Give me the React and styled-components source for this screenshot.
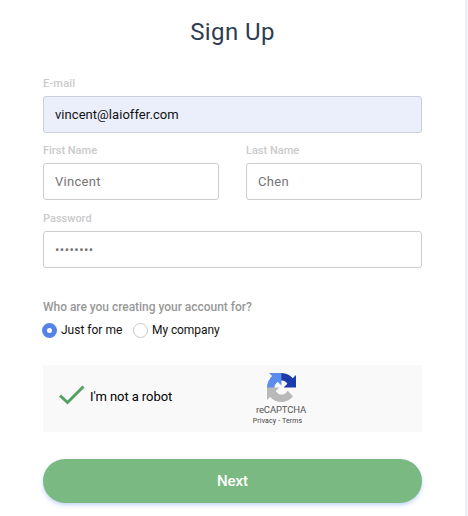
import React from 'react';
import styled, { createGlobalStyle } from 'styled-components';

const GlobalStyle = createGlobalStyle`
  *, *::before, *::after { box-sizing: border-box; }
  body {
    margin: 0;
    background: #efeff6;
    font-family: Roboto, sans-serif;
    overflow: hidden;
  }
`;

const Card = styled.main`
  width: 465px;
  height: 516px;
  padding: 18px 43px 0;
  background: #fff;
`;

const Title = styled.h1`
  margin: 0 0 30px;
  font-size: 24px;
  font-weight: 400;
  line-height: 29px;
  letter-spacing: 0.4px;
  text-align: center;
  color: #2e3d51;
`;

const Form = styled.form`
  display: flex;
  flex-direction: column;
  width: 379px;
`;

const Row = styled.div`
  display: grid;
  grid-template-columns: 176px 176px;
  justify-content: space-between;
`;

const Field = styled.label`
  display: flex;
  flex-direction: column;
  height: 67.3px;
`;

const Label = styled.span`
  flex: none;
  height: 19px;
  font-size: 11px;
  font-weight: 500;
  line-height: 14px;
  letter-spacing: ${(p) => p.$spacing || '0'};
  color: #cacaca;
`;

const Input = styled.input`
  width: 100%;
  height: 37px;
  padding: 0 11px;
  border: 1px solid ${(p) => (p.$filled ? '#cbcfd9' : '#cdcdcd')};
  border-radius: 3px;
  outline: none;
  background: ${(p) => (p.$filled ? '#ebeffc' : '#fff')};
  color: ${(p) => (p.$filled ? '#111' : '#757575')};
  font: 400 13px Roboto, sans-serif;
  letter-spacing: ${(p) => p.$spacing || '0.05px'};
`;

const Question = styled.p`
  margin: 21px 0 9px;
  font-size: 12px;
  font-weight: 500;
  line-height: 14px;
  letter-spacing: -0.03px;
  color: #989898;
`;

const Choices = styled.div`
  display: flex;
  align-items: center;
  height: 15px;
  margin-left: -1px;
`;

const Choice = styled.label`
  display: flex;
  align-items: center;
  gap: 4px;
  width: ${(p) => p.$width};
  font-size: 12px;
  line-height: 15px;
  letter-spacing: ${(p) => p.$spacing};
  white-space: nowrap;
  color: #111;
`;

const Radio = styled.span`
  flex: none;
  width: 15px;
  height: 15px;
  margin-top: 1px;
  border: ${(p) => (p.$checked ? '5px solid #5582ea' : '1px solid #c9c9c9')};
  border-radius: 50%;
  background: #fff;
`;

const Captcha = styled.div`
  display: flex;
  height: 67px;
  margin-top: 27px;
  background: #f9f9f9;
`;

const CheckIcon = styled.svg`
  flex: none;
  width: 28px;
  height: 22px;
  margin: 19px 4px 0 15px;
`;

const CaptchaText = styled.span`
  width: 163px;
  padding-top: 24px;
  font-size: 13px;
  line-height: 15px;
  letter-spacing: -0.08px;
  color: #000;
`;

const Brand = styled.div`
  display: flex;
  flex-direction: column;
  align-items: center;
  width: 56px;
  padding-top: 8px;
`;

const Logo = styled.svg`
  width: 29px;
  height: 29px;
`;

const BrandName = styled.span`
  margin-top: 2px;
  font-size: 9.5px;
  line-height: 12px;
  letter-spacing: -0.15px;
  color: #555;
`;

const BrandLinks = styled.span`
  margin-right: 7px;
  font-size: 7px;
  line-height: 10px;
  letter-spacing: 0.13px;
  white-space: nowrap;
  color: #444;
`;

const NextButton = styled.button`
  height: 44px;
  margin-top: 27px;
  padding: 0;
  border: 0;
  border-radius: 22px;
  background: #7ab982;
  box-shadow: 0 2px 4px rgba(80, 130, 235, 0.35);
  font: 500 15px/44px Roboto, sans-serif;
  color: #fff;
`;

function TextField({ label, labelSpacing, ...input }) {
  return (
    <Field>
      <Label $spacing={labelSpacing}>{label}</Label>
      <Input {...input} />
    </Field>
  );
}

export default function App() {
  return (
    <>
      <GlobalStyle />
      <Card>
        <Title>Sign Up</Title>
        <Form>
          <TextField label="E-mail" labelSpacing="0.2px" defaultValue="vincent@laioffer.com" $filled />
          <Row>
            <TextField label="First Name" defaultValue="Vincent" $spacing="0.3px" />
            <TextField label="Last Name" defaultValue="Chen" $spacing="0.35px" />
          </Row>
          <TextField label="Password" defaultValue="••••••••" $spacing="0.45px" />
          <Question>Who are you creating your account for?</Question>
          <Choices>
            <Choice $width="91px" $spacing="0">
              <Radio $checked />
              Just for me
            </Choice>
            <Choice $width="90px" $spacing="-0.08px">
              <Radio />
              My company
            </Choice>
          </Choices>
          <Captcha>
            <CheckIcon viewBox="0 0 28 22">
              <path d="M2 11.5 L9.5 18.5 L25.5 2.5" fill="none" stroke="#55a162" strokeWidth="3" />
            </CheckIcon>
            <CaptchaText>I'm not a robot</CaptchaText>
            <Brand>
              <Logo viewBox="0 0 64 64">
                <path fill="#1c3aa9" d="M64 31.955l-.033-1.37V4.687l-7.16 7.16C50.948 4.674 42.033.093 32.05.093c-10.4 0-19.622 4.96-25.458 12.64l11.736 11.86a15.55 15.55 0 0 1 4.754-5.334c2.05-1.6 4.952-2.906 8.968-2.906.485 0 .86.057 1.135.163 4.976.393 9.288 3.14 11.828 7.124l-8.307 8.307L64 31.953" />
                <path fill="#5b8def" d="M31.862.094l-1.37.033H4.594l7.16 7.16C4.58 13.147 0 22.06 0 32.046c0 10.4 4.96 19.622 12.64 25.458L24.5 45.768a15.55 15.55 0 0 1-5.334-4.754c-1.6-2.05-2.906-4.952-2.906-8.968 0-.485.057-.86.163-1.135.393-4.976 3.14-9.288 7.124-11.828l8.307 8.307L31.86.095" />
                <path fill="#b9b9b9" d="M.001 32.045l.033 1.37v25.898l7.16-7.16c5.86 7.173 14.774 11.754 24.76 11.754 10.4 0 19.622-4.96 25.458-12.64l-11.736-11.86a15.55 15.55 0 0 1-4.754 5.334c-2.05 1.6-4.952 2.906-8.968 2.906-.485 0-.86-.057-1.135-.163-4.976-.393-9.288-3.14-11.828-7.124l8.307-8.307c-10.522.04-22.4.066-27.295-.005" />
              </Logo>
              <BrandName>reCAPTCHA</BrandName>
              <BrandLinks>Privacy - Terms</BrandLinks>
            </Brand>
          </Captcha>
          <NextButton type="button">Next</NextButton>
        </Form>
      </Card>
    </>
  );
}
